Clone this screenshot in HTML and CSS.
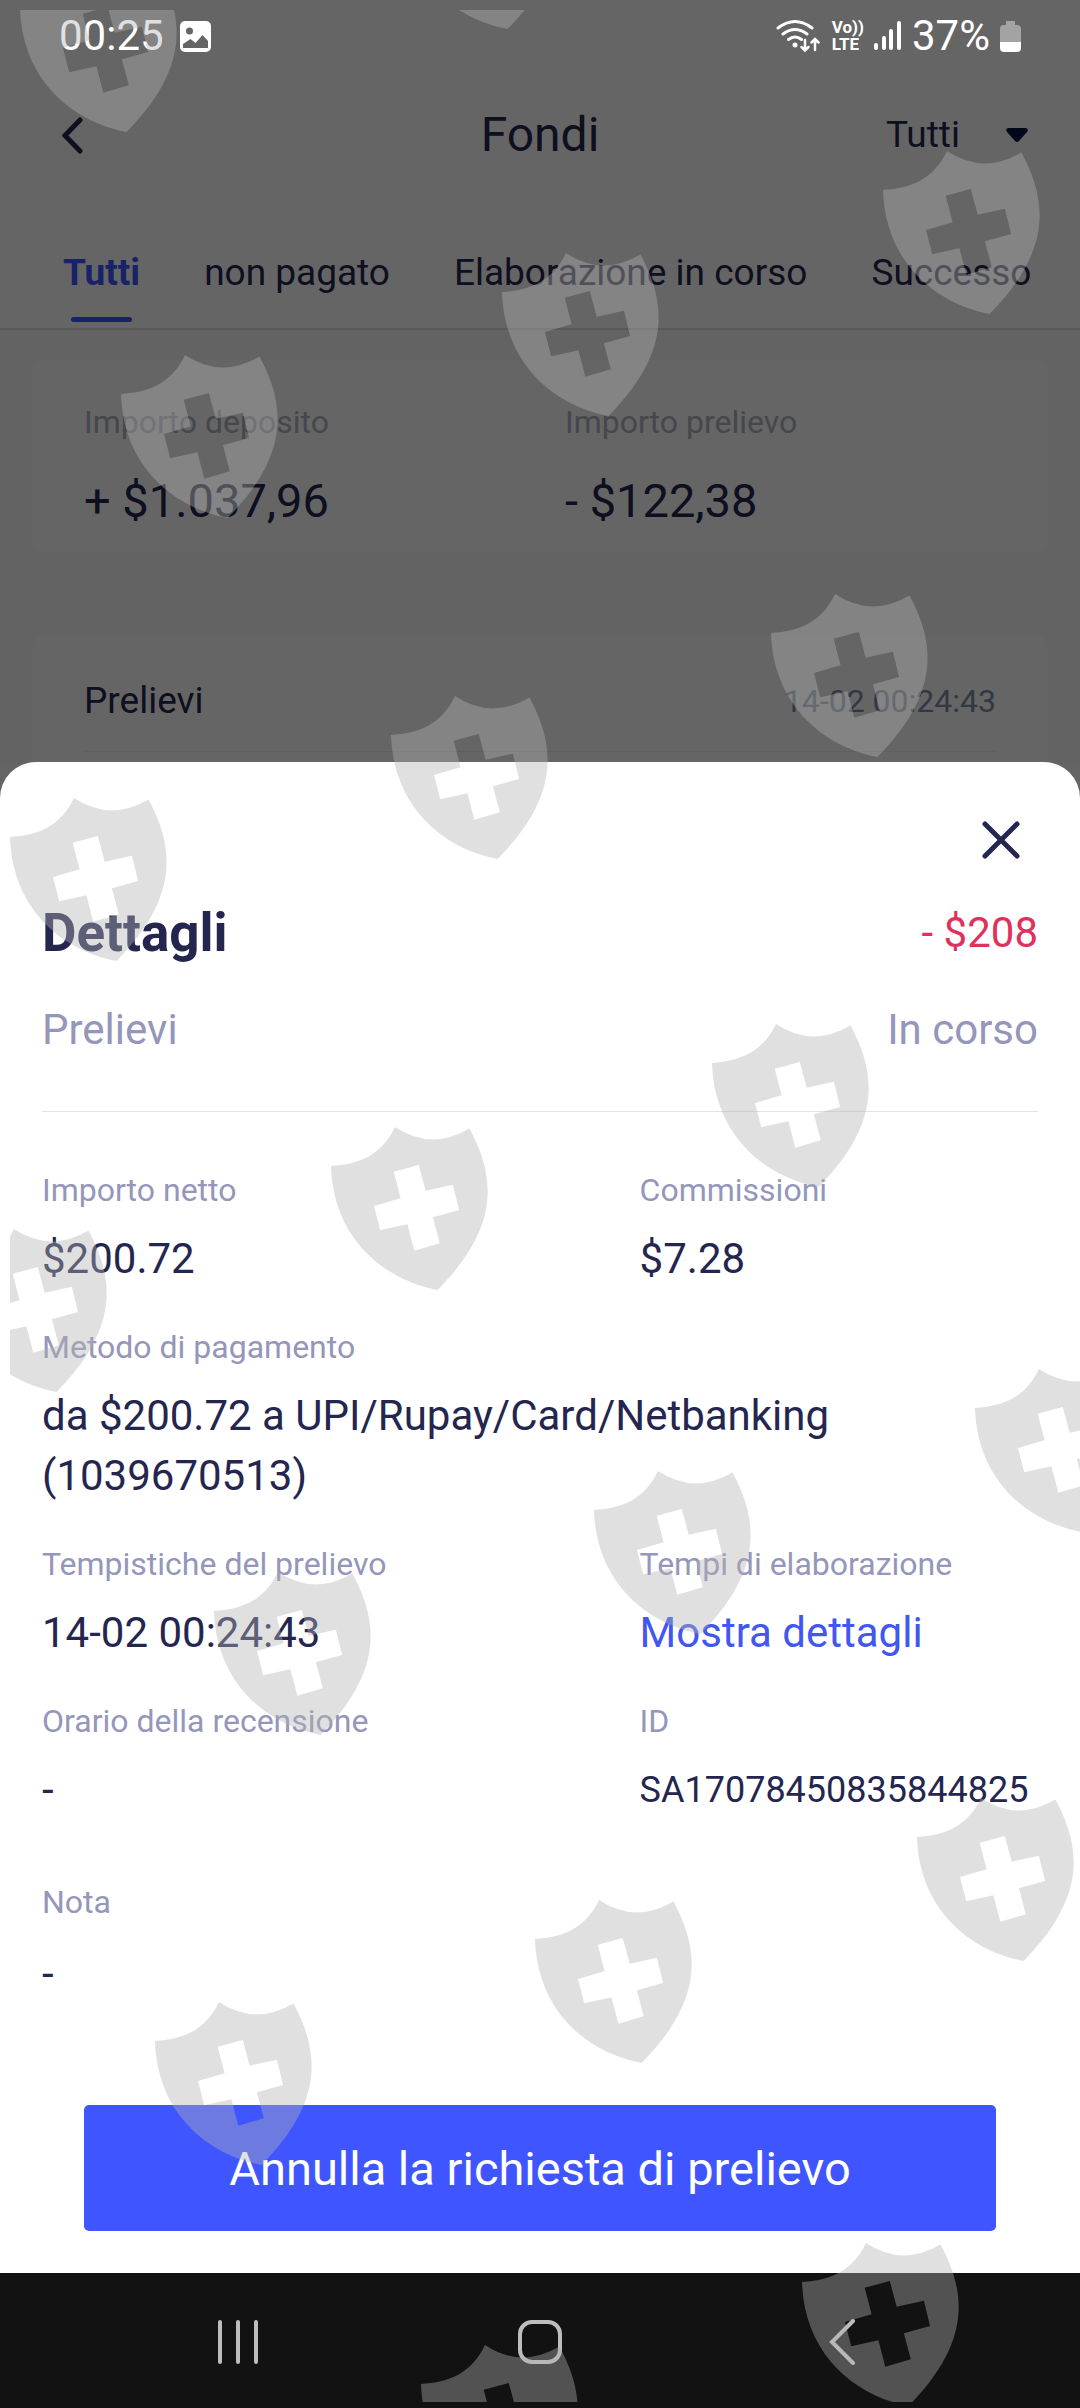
FILE: index.html
```
<!DOCTYPE html>
<html lang="it">
<head>
    <meta charset="UTF-8">
    <meta name="viewport" content="width=device-width, initial-scale=1">
    <title>Fondi</title>
    <link rel="stylesheet" href="styles.css">
</head>
<body>
    <div class="screen">
        <div class="status-bar">
            <span class="clock">00:25</span>
            <svg class="photo-icon" width="31" height="31" viewBox="0 0 31 31">
                <path fill="#fff" fill-rule="evenodd" d="M5 0h21a5 5 0 0 1 5 5v21a5 5 0 0 1-5 5H5a5 5 0 0 1-5-5V5a5 5 0 0 1 5-5zM9.500 6.500a3.500 3.500 0 1 0 0 7 3.500 3.500 0 0 0 0-7zM3 27h25v-7l-5.500-6-7 8-5-4L3 23z"/>
            </svg>
            <div class="status-icons">
                <svg width="46" height="34" viewBox="0 0 46 34" fill="none" stroke="#fff" stroke-width="3" stroke-linecap="round">
                    <path d="M2 9q17-13 34 0M7 15q12-9 24 0M12.500 20.500q6.500-5 13 0"/>
                    <circle cx="19" cy="26" r="2.500" fill="#fff" stroke="none"/>
                    <path d="M29 21v10M25.500 28l3.500 3.500 3.500-3.500M39 31V21M35.500 23.500l3.500-3.500 3.500 3.500" stroke-width="2.500"/>
                </svg>
                <span class="volte">Vo))<br>LTE</span>
                <svg width="28" height="30" viewBox="0 0 28 30" fill="#fff">
                    <rect x="0" y="22" width="4" height="7" rx="2"/>
                    <rect x="8" y="15" width="4" height="14" rx="2"/>
                    <rect x="15" y="8" width="4" height="21" rx="2"/>
                    <rect x="23" y="0" width="4" height="29" rx="2"/>
                </svg>
                <span class="battery-level">37%</span>
                <svg width="21" height="31" viewBox="0 0 21 31">
                    <path fill="#a3a3a3" d="M6 0h9v4h2a4 4 0 0 1 4 4v14H0V8a4 4 0 0 1 4-4h2z"/>
                    <path fill="#fff" d="M0 21h21v6a4 4 0 0 1-4 4H4a4 4 0 0 1-4-4z"/>
                </svg>
            </div>
        </div>

        <div class="header">
            <button class="back" aria-label="Indietro">
                <svg width="22" height="37" viewBox="0 0 22 37"><path d="M18 3L3 18.500 18 34"/></svg>
            </button>
            <h1>Fondi</h1>
            <label class="filter">
                <select aria-label="Filtro">
                    <option>Tutti</option>
                    <option>Depositi</option>
                    <option>Prelievi</option>
                </select>
                <svg width="22" height="15" viewBox="0 0 22 15"><path fill="#061640" d="M2 0h18q3 1 1 4l-8 9q-2 2-4 0L1 4q-2-3 1-4z"/></svg>
            </label>
        </div>

        <div class="tabs">
            <button class="tab active">Tutti</button>
            <button class="tab">non pagato</button>
            <button class="tab">Elaborazione in corso</button>
            <button class="tab">Successo</button>
        </div>

        <div class="cards">
            <div class="card totals">
                <div>
                    <div class="total-label">Importo deposito</div>
                    <div class="total">+ $1.037,96</div>
                </div>
                <div>
                    <div class="total-label">Importo prelievo</div>
                    <div class="total">- $122,38</div>
                </div>
            </div>
            <div class="card entries">
                <div class="entry">
                    <span class="entry-type">Prelievi</span>
                    <span class="entry-date">14-02 00:24:43</span>
                </div>
            </div>
        </div>
    </div>

    <div class="sheet" role="dialog" aria-labelledby="sheet-title">
        <button class="close" aria-label="Chiudi">
            <svg width="40" height="40" viewBox="0 0 40 40"><path d="M4 4l32 32M36 4L4 36"/></svg>
        </button>
        <div class="sheet-row">
            <h2 id="sheet-title">Dettagli</h2>
            <span class="amount">- $208</span>
        </div>
        <div class="sheet-row sub">
            <span>Prelievi</span>
            <span>In corso</span>
        </div>
        <dl class="details">
            <div>
                <dt>Importo netto</dt>
                <dd>$200.72</dd>
            </div>
            <div>
                <dt>Commissioni</dt>
                <dd>$7.28</dd>
            </div>
            <div class="wide">
                <dt>Metodo di pagamento</dt>
                <dd>da $200.72 a UPI/Rupay/Card/Netbanking (1039670513)</dd>
            </div>
            <div>
                <dt>Tempistiche del prelievo</dt>
                <dd>14-02 00:24:43</dd>
            </div>
            <div>
                <dt>Tempi di elaborazione</dt>
                <dd><a href="#">Mostra dettagli</a></dd>
            </div>
            <div>
                <dt>Orario della recensione</dt>
                <dd>-</dd>
            </div>
            <div>
                <dt>ID</dt>
                <dd class="code">SA17078450835844825</dd>
            </div>
            <div class="wide note">
                <dt>Nota</dt>
                <dd>-</dd>
            </div>
        </dl>
        <button class="cancel">Annulla la richiesta di prelievo</button>
    </div>

    <div class="nav-bar">
        <button aria-label="Recenti">
            <svg width="40" height="44" viewBox="0 0 40 44"><path d="M2 2v40M20 2v40M38 2v40"/></svg>
        </button>
        <button aria-label="Home">
            <svg width="44" height="44" viewBox="0 0 44 44"><rect x="2" y="2" width="40" height="40" rx="12"/></svg>
        </button>
        <button aria-label="Indietro">
            <svg width="26" height="46" viewBox="0 0 26 46"><path d="M24 2L3 23l21 21"/></svg>
        </button>
    </div>

    <!-- shield watermark, laid over everything -->
    <svg class="watermark" viewBox="0 0 1080 2408" preserveAspectRatio="xMidYMin slice" aria-hidden="true">
        <defs>
            <path id="shield" fill-rule="evenodd" d="M0 0C28-2 50-10 64-39Q100-15 138.500-37.500C161 5 174 56 106.500 124C50 113 2 70 0 0z
                M62.700 5.700L69.600 32.300 43 40 49.200 64.300 76.400 58.300 83.300 84.700 108.800 77.300 101.900 51.300 128.100 44 121.900 18.700 94.700 24.700 87.800-1z"/>
        </defs>
        <use href="#shield" x="20" y="8"/>
        <use href="#shield" x="401" y="-95"/>
        <use href="#shield" x="883" y="190"/>
        <use href="#shield" x="502" y="292"/>
        <use href="#shield" x="121" y="394"/>
        <use href="#shield" x="771" y="633"/>
        <use href="#shield" x="391" y="735"/>
        <use href="#shield" x="10" y="837"/>
        <use href="#shield" x="712" y="1063"/>
        <use href="#shield" x="331" y="1166"/>
        <use href="#shield" x="-50" y="1268"/>
        <use href="#shield" x="975" y="1408"/>
        <use href="#shield" x="594" y="1510"/>
        <use href="#shield" x="214" y="1611"/>
        <use href="#shield" x="917" y="1837"/>
        <use href="#shield" x="535" y="1939"/>
        <use href="#shield" x="155" y="2041"/>
        <use href="#shield" x="802" y="2282"/>
        <use href="#shield" x="421" y="2384"/>
    </svg>
</body>
</html>
```

FILE: styles.css
```
* {
    box-sizing: border-box;
}
body {
    position: relative;
    display: flex;
    flex-direction: column;
    height: 100vh;
    margin: 0;
    background: #646464;
    color: #24264f;
    font-family: Roboto, "Liberation Sans", sans-serif;
    overflow: hidden;
}
button, select {
    padding: 0;
    border: none;
    background: none;
    color: inherit;
    font-family: inherit;
    cursor: pointer;
}
h1, h2, dl, dd {
    margin: 0;
}
svg {
    display: block;
    flex-shrink: 0;
}

/* page behind the sheet */
.screen {
    position: relative;
    flex: 1;
    min-height: 0;
    overflow: hidden;
    background: #fdfdfd;
}
.screen::after {
    content: "";
    position: absolute;
    inset: 0;
    background: rgba(0,0,0,0.6);
}
.status-bar {
    position: relative;
    z-index: 1;
    display: flex;
    align-items: center;
    height: 72px;
    padding: 0 59px;
    color: #fff;
    font-size: 42px;
    line-height: 48px;
}
.photo-icon {
    margin-left: 16px;
}
.status-icons {
    display: flex;
    align-items: center;
    gap: 10px;
    margin-left: auto;
}
.volte {
    font-size: 17px;
    font-weight: 700;
    line-height: 17px;
}
.header {
    display: grid;
    grid-template-columns: 1fr auto 1fr;
    align-items: center;
    padding: 33px 52px;
}
.header h1 {
    font-size: 48px;
    font-weight: 400;
    line-height: 60px;
}
.back {
    justify-self: start;
    padding-left: 10px;
}
.back path, .close path {
    fill: none;
    stroke: #24264f;
    stroke-width: 5;
    stroke-linecap: round;
}
.filter {
    display: flex;
    align-items: center;
    justify-self: end;
}
.filter select {
    width: 120px;
    appearance: none;
    font-size: 37px;
    line-height: 48px;
}
.tabs {
    display: flex;
    gap: 64px;
    padding: 51px 0 6px 63px;
    border-bottom: 2px solid #dcdcdc;
    overflow: hidden;
}
.tab {
    position: relative;
    flex-shrink: 0;
    padding-bottom: 25px;
    font-size: 37px;
    line-height: 48px;
}
.tab.active {
    color: #3d56ff;
    font-weight: 700;
}
.tab.active::after {
    content: "";
    position: absolute;
    left: 8px;
    right: 8px;
    bottom: 0;
    height: 5px;
    border-radius: 3px;
    background: #3d56ff;
}
.cards {
    display: flex;
    flex-direction: column;
    gap: 84px;
    padding: 30px 32px;
    background: #f8f8f8;
}
.card {
    padding: 0 52px;
    border-radius: 12px;
    background: #fdfdfd;
}
.totals {
    display: grid;
    grid-template-columns: 481px 1fr;
    padding-top: 38px;
    padding-bottom: 16px;
}
.total-label {
    color: #b0b0c0;
    font-size: 32px;
    line-height: 48px;
}
.total {
    margin-top: 20px;
    font-size: 47px;
    line-height: 70px;
}
.entries {
    padding-bottom: 48px;
}
.entry {
    display: flex;
    align-items: center;
    justify-content: space-between;
    padding: 35px 0 20px;
    border-bottom: 1px solid #eee;
    line-height: 60px;
}
.entry-type {
    font-size: 37px;
}
.entry-date {
    color: #7c8ca8;
    font-size: 32px;
}

/* bottom sheet */
.sheet {
    display: flex;
    flex-direction: column;
    padding: 48px 42px 42px;
    border-radius: 36px 36px 0 0;
    background: #fff;
}
.close {
    display: flex;
    align-items: center;
    justify-content: center;
    align-self: flex-end;
    width: 74px;
    height: 60px;
    margin-bottom: 27px;
}
.sheet-row {
    display: flex;
    align-items: center;
    justify-content: space-between;
    font-size: 42px;
    line-height: 60px;
}
.sheet-row h2 {
    font-size: 53px;
    font-weight: 700;
    line-height: 72px;
}
.amount {
    color: #e0315c;
}
.sub {
    margin-top: 31px;
    padding-bottom: 51px;
    border-bottom: 1px solid #e2e2e2;
    color: #9496ba;
}
.details {
    display: grid;
    grid-template-columns: 3fr 2fr;
    row-gap: 34px;
    padding: 54px 0 101px;
}
.details dt {
    margin-bottom: 15px;
    color: #9496ba;
    font-size: 32px;
    line-height: 48px;
}
.details dd {
    font-size: 42px;
    line-height: 60px;
}
.details .code {
    font-size: 36px;
}
.details a {
    color: #4256f0;
    text-decoration: none;
}
.wide {
    grid-column: span 2;
}
.wide dd {
    max-width: 900px;
}
.note {
    margin-top: 24px;
}
.note dt {
    margin-bottom: 18px;
}
.cancel {
    margin: 0 42px;
    padding: 34px 0 32px;
    border-radius: 5px;
    background: #3f55ff;
    color: #fff;
    font-size: 47px;
    line-height: 60px;
}

.nav-bar {
    display: flex;
    justify-content: center;
    height: 135px;
    padding-top: 3px;
    background: #121212;
}
.nav-bar button {
    display: flex;
    align-items: center;
    justify-content: center;
    width: 28%;
}
.nav-bar path, .nav-bar rect {
    fill: none;
    stroke: #bdbdbd;
    stroke-width: 4;
    stroke-linecap: round;
}

.watermark {
    position: absolute;
    inset: 0;
    z-index: 2;
    width: 100%;
    height: 100%;
    fill: #b3b3b3;
    opacity: 0.4;
    clip-path: inset(10px 0 6px 10px);
    pointer-events: none;
}
```
